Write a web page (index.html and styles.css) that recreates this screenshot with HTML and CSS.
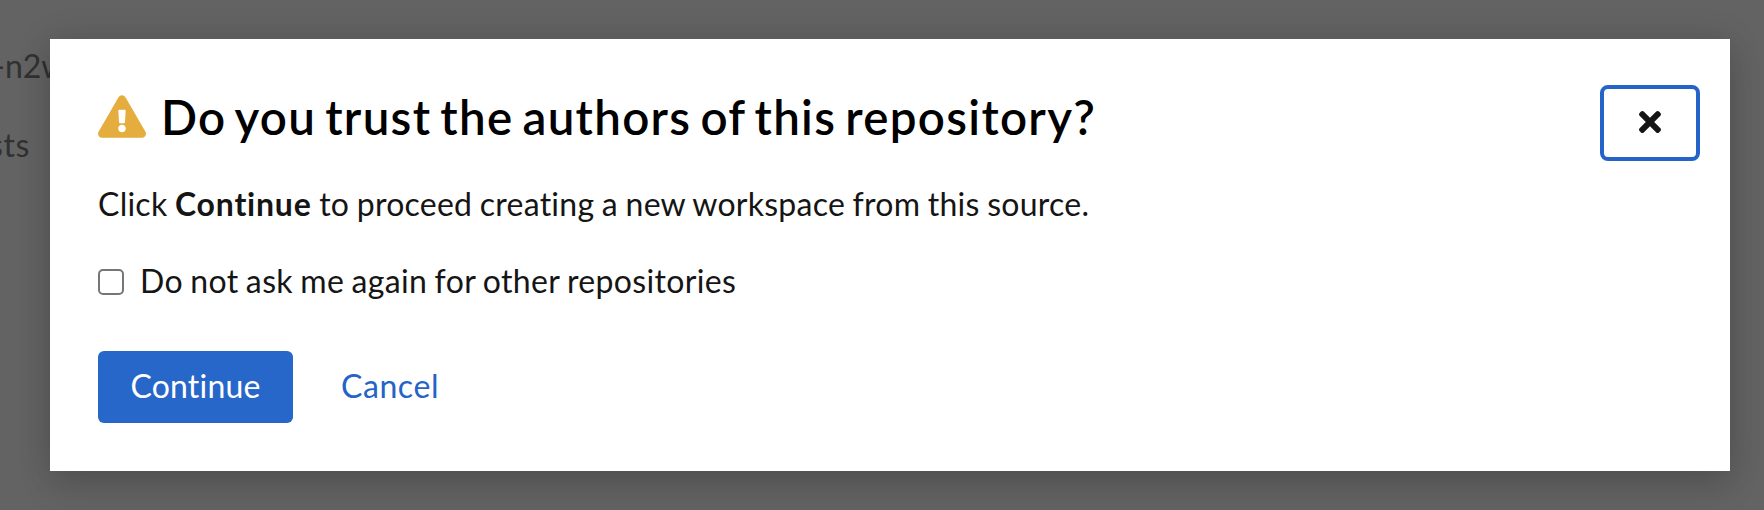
FILE: index.html
```html
<!DOCTYPE html>
<html lang="en">
<head>
<meta charset="utf-8">
<title>Do you trust the authors of this repository?</title>
<link rel="stylesheet" href="styles.css">
</head>
<body>
<div class="page">
  <div class="page-text page-text-first">-n2w</div>
  <div class="page-text page-text-second">sts</div>
</div>
<section class="modal" role="dialog" aria-modal="true" aria-labelledby="modal-title">
  <header class="modal-header">
    <svg class="warning-icon" viewBox="0 0 576 512" aria-hidden="true"><path fill="currentColor" d="M569.517 440.013C587.975 472.007 564.806 512 527.94 512H48.054c-36.937 0-59.999-40.055-41.577-71.987L246.423 23.985c18.467-32.009 64.72-31.951 83.154 0l239.94 416.028zM288 354c-25.405 0-46 20.595-46 46s20.595 46 46 46 46-20.595 46-46-20.595-46-46-46zm-43.673-165.346l7.418 136c.347 6.364 5.609 11.346 11.982 11.346h48.546c6.373 0 11.635-4.982 11.982-11.346l7.418-136c.375-6.874-5.098-12.654-11.982-12.654h-63.383c-6.884 0-12.356 5.78-11.981 12.654z"/></svg>
    <h1 class="modal-title" id="modal-title">Do you trust the authors of this repository?</h1>
    <button class="close-button" type="button" aria-label="Close">
      <svg class="close-icon" viewBox="0 0 352 352" aria-hidden="true"><path fill="currentColor" d="M242.720 176l100.070-100.070c12.280-12.280 12.280-32.190 0-44.480l-22.240-22.240c-12.280-12.280-32.190-12.280-44.480 0L176 109.280 75.930 9.210c-12.280-12.280-32.190-12.280-44.480 0L9.210 31.450c-12.280 12.280-12.280 32.190 0 44.480L109.280 176 9.210 276.070c-12.280 12.280-12.280 32.190 0 44.480l22.240 22.240c12.280 12.280 32.200 12.280 44.480 0L176 242.720l100.070 100.070c12.280 12.280 32.200 12.280 44.480 0l22.240-22.240c12.280-12.280 12.280-32.190 0-44.480L242.720 176z"/></svg>
    </button>
  </header>
  <p class="message">Click <b class="message-action">Continue</b> to proceed creating a new workspace from this source.</p>
  <label class="option"><input class="option-box" type="checkbox"><span class="option-label">Do not ask me again for other repositories</span></label>
  <footer class="actions">
    <button class="button button-primary" type="button">Continue</button>
    <button class="button button-link" type="button">Cancel</button>
  </footer>
</section>
</body>
</html>
```
FILE: styles.css
```css
* {
  box-sizing: border-box;
}

body {
  margin: 0;
  height: 510px;
  overflow: hidden;
  padding: 39px 34px 39px 50px;
  background: #636363;
  color: #151515;
  font: 32px/48px Lato, "Open Sans", sans-serif;
  font-variant-ligatures: none;
}

button {
  font: inherit;
  font-variant-ligatures: none;
}

/* Page content seen behind the modal */
.page {
  position: absolute;
  inset: 0;
  overflow: hidden;
  color: #303132;
}

.page-text {
  height: 48px;
  white-space: nowrap;
}

.page-text-first {
  margin: 42px 0 0 -7px;
}

.page-text-second {
  margin: 31px 0 0 -11px;
  letter-spacing: .6px;
}

.modal {
  position: relative;
  width: 1680px;
  height: 432px;
  padding: 46px 30px 48px 48px;
  background: #fff;
  box-shadow: 0 16px 32px rgba(3, 3, 3, .12), 0 0 32px rgba(3, 3, 3, .12);
}

.modal-header {
  display: flex;
  height: 76px;
}

.warning-icon {
  width: 48px;
  height: 43px;
  margin: 10px 15px 0 0;
  color: #e5ac3e;
}

.modal-title {
  margin: 0;
  color: #000;
  font-size: 47.5px;
  font-weight: 600;
  line-height: 64px;
  letter-spacing: 1.3px;
  word-spacing: -4.1px;
  white-space: nowrap;
}

.close-button {
  display: flex;
  align-items: center;
  justify-content: center;
  width: 100px;
  height: 76px;
  margin-left: auto;
  padding: 0 0 2px;
  border: 4px solid #2463c7;
  border-radius: 8px;
  background: #fff;
  color: #151515;
}

.close-icon {
  width: 22px;
  height: 22px;
}

.message {
  margin: 19px 0 0;
  height: 48px;
  letter-spacing: .25px;
  word-spacing: -.9px;
  white-space: nowrap;
}

.message-action {
  letter-spacing: .8px;
}

.option {
  display: flex;
  align-items: center;
  height: 48px;
  margin-top: 30px;
}

.option-box {
  appearance: none;
  width: 26px;
  height: 26px;
  margin: 0 16px 0 0;
  border: 2px solid #767676;
  border-radius: 5px;
  background: #fff;
}

.option-label {
  height: 50px;
  letter-spacing: .35px;
  word-spacing: -1.2px;
  white-space: nowrap;
}

.actions {
  display: flex;
  margin-top: 45px;
}

.button {
  height: 72px;
  padding: 0 0 2px;
  border: 0;
  border-radius: 6px;
}

.button-primary {
  width: 195px;
  background: #2767c9;
  color: #fff;
  letter-spacing: .2px;
}

.button-link {
  width: 162px;
  margin-left: 16px;
  background: none;
  color: #2463c7;
  letter-spacing: .6px;
}
```
